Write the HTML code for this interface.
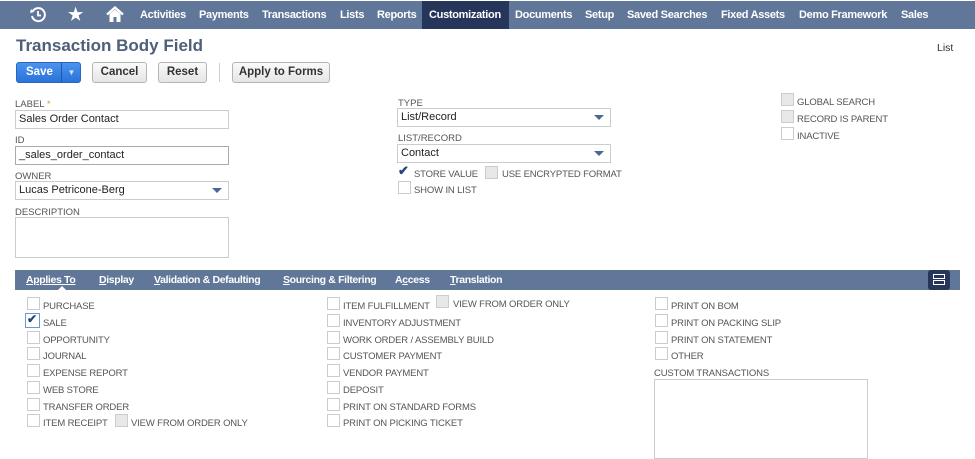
<!DOCTYPE html>
<html><head><meta charset="utf-8"><style>
*{margin:0;padding:0;box-sizing:border-box}
body{width:975px;height:455px;overflow:hidden;background:#fff;font-family:"Liberation Sans",Arial,sans-serif;position:relative;color:#333}
.a{position:absolute;white-space:nowrap}
.nav{position:absolute;left:0;top:1px;width:975px;height:28px;background:#607799}
.nav span{position:absolute;top:8px;color:#fff;font-weight:bold;font-size:11px;letter-spacing:-0.3px}
.btn{position:absolute;top:62px;height:21px;border:1px solid #b5b5b5;border-radius:3px;background:linear-gradient(#fafafa,#e5e5e5);font-size:11.5px;font-weight:bold;color:#333;text-align:center;line-height:19px}
.lbl{position:absolute;font-size:9.5px;color:#555}
.inp{position:absolute;height:19px;border:1px solid #ccc;font-size:11px;color:#222;padding-left:3px;line-height:17px;background:#fff}
.dd:after{content:"";position:absolute;right:6px;top:6px;border-left:5px solid transparent;border-right:5px solid transparent;border-top:5px solid #4a6895}
.cb{position:absolute;width:13px;height:13px;border:1px solid #ccc;background:#fff}
.cbt{position:absolute;font-size:9.5px;color:#555;letter-spacing:-0.15px}
.tabs{position:absolute;left:15px;top:270px;width:945px;height:20px;background:#607799}
.tabs span{position:absolute;top:4px;color:#fff;font-weight:bold;font-size:10.5px;letter-spacing:-0.35px}
</style></head><body>
<div class="nav">
<svg class="a" style="left:29px;top:5px" width="18" height="18" viewBox="0 0 18 18"><path d="M4 5 A6.5 6.5 0 1 1 3 10" fill="none" stroke="#fff" stroke-width="2"/><path d="M2 3 L5 6 L1 7Z" fill="#fff"/><path d="M9 5V9.5H12" fill="none" stroke="#fff" stroke-width="1.8"/></svg>
<span style="left:68px;top:4px;font-size:17px">★</span>
<svg class="a" style="left:106px;top:5px" width="18" height="17" viewBox="0 0 18 17"><path d="M1 8.5 L9 1.5 L17 8.5" fill="none" stroke="#fff" stroke-width="2.2"/><path d="M3.5 8 V16 H7.5 V11 H10.5 V16 H14.5 V8 L9 3.5Z" fill="#fff"/></svg>
<span style="left:140px">Activities</span>
<span style="left:199px">Payments</span>
<span style="left:262px">Transactions</span>
<span style="left:340px">Lists</span>
<span style="left:377px">Reports</span>
<div class="a" style="left:422px;top:0;width:87px;height:28px;background:#25365a"></div>
<span style="left:429px">Customization</span>
<span style="left:515px">Documents</span>
<span style="left:585px">Setup</span>
<span style="left:627px">Saved Searches</span>
<span style="left:721px">Fixed Assets</span>
<span style="left:799px">Demo Framework</span>
<span style="left:901px">Sales</span>
</div>
<div class="a" style="left:16px;top:36px;font-size:17px;font-weight:bold;color:#4d5f79">Transaction Body Field</div>
<div class="a" style="left:937px;top:42px;font-size:10.5px;color:#333">List</div>
<div class="btn" style="left:16px;width:65px;background:linear-gradient(#4b93ee,#2a73d8);border-color:#2a65c0;color:#fff;text-align:left;padding-left:9px">Save<span style="position:absolute;left:44px;top:0;height:19px;border-left:1px solid #1d58ad;width:20px;text-align:center;font-size:8px;color:#cfe0fa">▼</span></div>
<div class="btn" style="left:92px;width:55px">Cancel</div>
<div class="btn" style="left:158px;width:49px">Reset</div>
<div class="a" style="left:219px;top:63px;width:1px;height:19px;background:#ccc"></div>
<div class="btn" style="left:232px;width:98px">Apply to Forms</div>

<div class="lbl" style="left:15px;top:99px">LABEL <span style="color:#d39c2c">*</span></div>
<div class="inp" style="left:15px;top:110px;width:214px">Sales Order Contact</div>
<div class="lbl" style="left:15px;top:135px">ID</div>
<div class="inp" style="left:15px;top:146px;width:214px;border-color:#aaa">_sales_order_contact</div>
<div class="lbl" style="left:15px;top:171px">OWNER</div>
<div class="inp dd" style="left:15px;top:181px;width:214px">Lucas Petricone-Berg</div>
<div class="lbl" style="left:15px;top:207px">DESCRIPTION</div>
<div class="inp" style="left:15px;top:217px;width:214px;height:41px"></div>

<div class="lbl" style="left:398px;top:98px">TYPE</div>
<div class="inp dd" style="left:397px;top:108px;width:214px">List/Record</div>
<div class="lbl" style="left:398px;top:133px">LIST/RECORD</div>
<div class="inp dd" style="left:397px;top:144px;width:214px">Contact</div>
<div class="a" style="left:398px;top:163px;font-size:13px;color:#26477c;font-weight:bold">✔</div>
<div class="cbt" style="left:414px;top:169px">STORE VALUE</div>
<div class="cb" style="left:485px;top:166px;background:#e8e8e8"></div>
<div class="cbt" style="left:502px;top:169px">USE ENCRYPTED FORMAT</div>
<div class="cb" style="left:398px;top:181px"></div>
<div class="cbt" style="left:414px;top:185px">SHOW IN LIST</div>

<div class="cb" style="left:781px;top:93px;background:#e8e8e8"></div><div class="cbt" style="left:797px;top:97px">GLOBAL SEARCH</div>
<div class="cb" style="left:781px;top:110px;background:#e8e8e8"></div><div class="cbt" style="left:797px;top:114px">RECORD IS PARENT</div>
<div class="cb" style="left:781px;top:127px"></div><div class="cbt" style="left:797px;top:131px">INACTIVE</div>

<div class="tabs">
<span style="left:11px;text-decoration:underline">Applies To</span>
<div class="a" style="left:43px;top:16px;border-left:4px solid transparent;border-right:4px solid transparent;border-bottom:4px solid #fff"></div>
<span style="left:84px"><u>D</u>isplay</span>
<span style="left:139px"><u>V</u>alidation &amp; Defaulting</span>
<span style="left:268px"><u>S</u>ourcing &amp; Filtering</span>
<span style="left:380px">A<u>c</u>cess</span>
<span style="left:435px"><u>T</u>ranslation</span>
<div class="a" style="left:913px;top:0;width:22px;height:20px;background:#25365a;border-radius:3px"><div class="a" style="left:5px;top:4px;width:12px;height:5px;border:1.3px solid #fff"></div><div class="a" style="left:5px;top:10px;width:12px;height:5px;border:1.3px solid #fff"></div></div>
</div>

<div class="cb" style="left:27px;top:297px"></div><div class="cbt" style="left:43px;top:301px">PURCHASE</div>
<div class="cb" style="left:25px;top:313px;width:15px;height:15px;border:1.5px solid #6a98d8"></div><div class="a" style="left:27px;top:312px;font-size:12px;color:#26477c;font-weight:bold">✔</div><div class="cbt" style="left:43px;top:318px">SALE</div>
<div class="cb" style="left:27px;top:331px"></div><div class="cbt" style="left:43px;top:335px">OPPORTUNITY</div>
<div class="cb" style="left:27px;top:347px"></div><div class="cbt" style="left:43px;top:351px">JOURNAL</div>
<div class="cb" style="left:27px;top:364px"></div><div class="cbt" style="left:43px;top:368px">EXPENSE REPORT</div>
<div class="cb" style="left:27px;top:381px"></div><div class="cbt" style="left:43px;top:385px">WEB STORE</div>
<div class="cb" style="left:27px;top:398px"></div><div class="cbt" style="left:43px;top:402px">TRANSFER ORDER</div>
<div class="cb" style="left:27px;top:414px"></div><div class="cbt" style="left:43px;top:418px">ITEM RECEIPT</div>
<div class="cb" style="left:115px;top:414px;background:#e8e8e8"></div><div class="cbt" style="left:131px;top:418px">VIEW FROM ORDER ONLY</div>

<div class="cb" style="left:327px;top:297px"></div><div class="cbt" style="left:343px;top:301px">ITEM FULFILLMENT</div>
<div class="cb" style="left:436px;top:295px;background:#e8e8e8"></div><div class="cbt" style="left:453px;top:299px">VIEW FROM ORDER ONLY</div>
<div class="cb" style="left:327px;top:314px"></div><div class="cbt" style="left:343px;top:318px">INVENTORY ADJUSTMENT</div>
<div class="cb" style="left:327px;top:331px"></div><div class="cbt" style="left:343px;top:335px">WORK ORDER / ASSEMBLY BUILD</div>
<div class="cb" style="left:327px;top:347px"></div><div class="cbt" style="left:343px;top:351px">CUSTOMER PAYMENT</div>
<div class="cb" style="left:327px;top:364px"></div><div class="cbt" style="left:343px;top:368px">VENDOR PAYMENT</div>
<div class="cb" style="left:327px;top:381px"></div><div class="cbt" style="left:343px;top:385px">DEPOSIT</div>
<div class="cb" style="left:327px;top:398px"></div><div class="cbt" style="left:343px;top:402px">PRINT ON STANDARD FORMS</div>
<div class="cb" style="left:327px;top:414px"></div><div class="cbt" style="left:343px;top:418px">PRINT ON PICKING TICKET</div>

<div class="cb" style="left:655px;top:297px"></div><div class="cbt" style="left:671px;top:301px">PRINT ON BOM</div>
<div class="cb" style="left:655px;top:314px"></div><div class="cbt" style="left:671px;top:318px">PRINT ON PACKING SLIP</div>
<div class="cb" style="left:655px;top:331px"></div><div class="cbt" style="left:671px;top:335px">PRINT ON STATEMENT</div>
<div class="cb" style="left:655px;top:347px"></div><div class="cbt" style="left:671px;top:351px">OTHER</div>
<div class="cbt" style="left:654px;top:368px">CUSTOM TRANSACTIONS</div>
<div class="a" style="left:654px;top:379px;width:214px;height:80px;border:1px solid #ccc"></div>
</body></html>
